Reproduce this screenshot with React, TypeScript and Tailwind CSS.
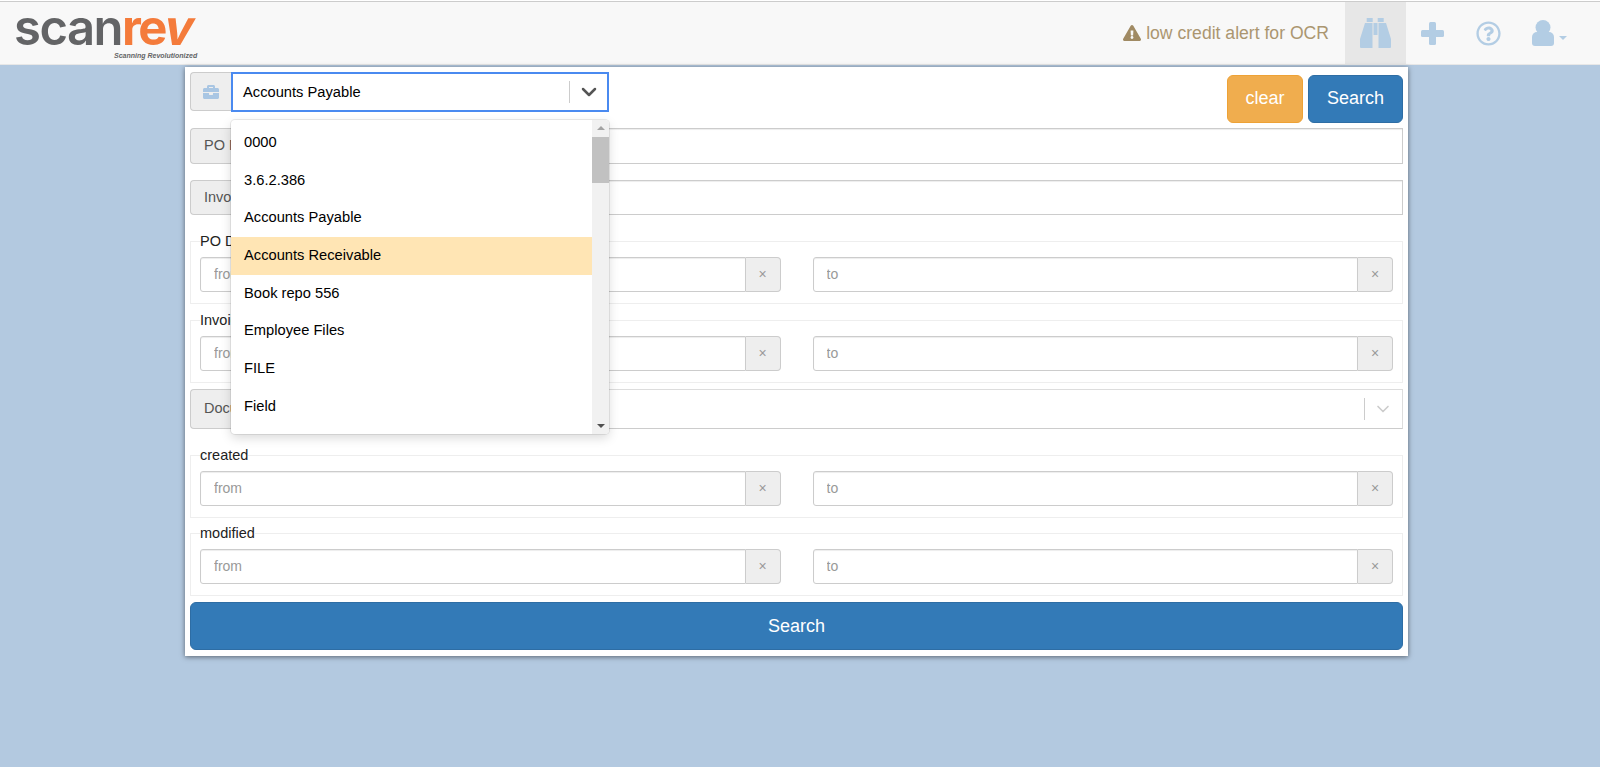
import { FaBriefcase, FaExclamationTriangle, FaRegQuestionCircle } from "react-icons/fa";
import { ChevronDown } from "lucide-react";

const options = ["0000", "3.6.2.386", "Accounts Payable", "Accounts Receivable", "Book repo 556", "Employee Files", "FILE", "Field"];

function DateInput({ placeholder }: { placeholder: string }) {
  return (
    <div className="flex h-[35px] flex-1">
      <input
        placeholder={placeholder}
        className="min-w-0 flex-1 rounded-l-[3px] border border-[#ccc] bg-white pl-[13px] text-[14px] shadow-[inset_0_1px_1px_rgba(0,0,0,0.075)] outline-none placeholder:text-[#999]"
      />
      <span className="flex w-[35px] items-center justify-center rounded-r-[4px] border border-l-0 border-[#ccc] bg-[#eee] text-[14px] text-[#999]">
        ×
      </span>
    </div>
  );
}

function DateRange({ label, className }: { label: string; className: string }) {
  return (
    <fieldset className={`border border-[#eee] px-[9px] pb-[11px] pt-[6px] ${className}`}>
      <legend className="text-[14.5px] leading-[20px] text-[#222]">{label}</legend>
      <div className="flex gap-[32px]">
        <DateInput placeholder="from" />
        <DateInput placeholder="to" />
      </div>
    </fieldset>
  );
}

function TextRow({ label, className }: { label: string; className: string }) {
  return (
    <div className={`flex ${className}`}>
      <span className="flex w-[120px] items-center whitespace-nowrap rounded-l-[4px] border border-r-0 border-[#ccc] bg-[#eee] pl-[13px] text-[14.5px] text-[#555]">
        {label}
      </span>
      <input className="min-w-0 flex-1 border border-[#ccc] bg-white shadow-[inset_0_1px_1px_rgba(0,0,0,0.075)] outline-none" />
    </div>
  );
}

function Dropdown() {
  return (
    <div className="absolute left-[46px] top-[53px] z-10 flex h-[314px] w-[378px] overflow-hidden rounded-[4px] bg-white shadow-[0_0_0_1px_rgba(0,0,0,0.08),0_4px_11px_rgba(0,0,0,0.15)]">
      <ul className="flex-1 pt-[4px] text-[14.7px] text-black">
        {options.map((o) => (
          <li key={o} className={`flex h-[37.7px] items-center pb-[2px] pl-[13px] ${o === "Accounts Receivable" ? "bg-[#ffe5b4]" : ""}`}>
            {o}
          </li>
        ))}
      </ul>
      <div className="relative w-[17px] bg-[#f1f1f1]">
        <span className="absolute left-[5px] top-[6px] h-0 w-0 border-x-[4px] border-b-[4px] border-x-transparent border-b-[#a3a3a3]" />
        <span className="absolute left-0 top-[17px] h-[46px] w-full bg-[#c1c1c1]" />
        <span className="absolute bottom-[6px] left-[5px] h-0 w-0 border-x-[4px] border-t-[4px] border-x-transparent border-t-[#505050]" />
      </div>
    </div>
  );
}

function BinocularsIcon() {
  return (
    <svg width="31" height="30" viewBox="0 0 31 30" fill="currentColor">
      <rect x="6.7" y="0" width="6" height="4" />
      <rect x="17.7" y="0" width="6" height="4" />
      <path d="M5 5h7.5v25H1a1 1 0 0 1-1-1v-8z" />
      <path d="M18.5 5H26l5 16v8a1 1 0 0 1-1 1H18.5z" />
      <rect x="13.5" y="5" width="4" height="12" />
    </svg>
  );
}

function PlusIcon() {
  return (
    <svg width="23" height="23" viewBox="0 0 23 23" fill="currentColor">
      <rect x="8" y="0" width="7" height="23" rx="1.5" />
      <rect x="0" y="8" width="23" height="7" rx="1.5" />
    </svg>
  );
}

function UserIcon() {
  return (
    <svg width="22" height="26" viewBox="0 0 22 26" fill="currentColor">
      <circle cx="11" cy="7.5" r="7.5" />
      <path d="M0 17a5 5 0 0 1 5-5h12a5 5 0 0 1 5 5v6a3 3 0 0 1-3 3H3a3 3 0 0 1-3-3z" />
    </svg>
  );
}

export default function App() {
  return (
    <div className="h-[767px] overflow-hidden bg-[#b3c9e0] font-['Liberation_Sans',Arial,sans-serif]">
      <div className="h-px bg-white" />
      <nav className="flex h-[64px] items-stretch justify-between border-y border-t-[#ccc] border-b-[#e7e7e7] bg-[#f8f8f8]">
        <div className="pl-[14px]">
          <div className="flex items-center font-['Inter',sans-serif] text-[49px] font-semibold leading-[52px] tracking-[-1.5px]">
            <span className="text-[#636466]">scan</span>
            <span className="font-bold tracking-[-2.5px] text-[#f47b3b]">
              re<span className="inline-block -skew-x-12">v</span>
            </span>
          </div>
          <div className="ml-[100px] -mt-[3px] text-[7px] font-bold italic leading-[9px] text-[#636466]">Scanning Revolutionized</div>
        </div>
        <div className="flex items-stretch pr-[33px] text-[#b3cde4]">
          <div className="flex items-center gap-[5px] pr-[16px] text-[17.6px] text-[#ab9670]">
            <FaExclamationTriangle className="h-[18px] w-[18px] text-[#a08a63]" />
            low credit alert for OCR
          </div>
          <div className="flex w-[61px] items-center justify-center bg-[#e7e7e7]">
            <BinocularsIcon />
          </div>
          <div className="flex w-[53px] items-center justify-center">
            <PlusIcon />
          </div>
          <div className="flex w-[59px] items-center justify-center">
            <FaRegQuestionCircle className="h-[25px] w-[25px]" />
          </div>
          <div className="flex items-center pl-[14px]">
            <UserIcon />
            <span className="ml-[5px] mt-[9px] h-0 w-0 border-x-[4px] border-t-[4px] border-x-transparent border-t-[#b3cde4]" />
          </div>
        </div>
      </nav>
      <main className="relative ml-[185px] mt-[2px] flex h-[589px] w-[1223px] flex-col bg-white px-[5px] pt-[5px] shadow-[0_1px_5px_rgba(0,0,0,0.5)]">
        <div className="flex h-[56px] items-start justify-between">
          <div className="flex">
            <span className="flex h-[39px] w-[41px] items-center justify-center rounded-l-[4px] border border-r-0 border-[#ccc] bg-[#eee]">
              <FaBriefcase className="h-[16px] w-[16px] text-[#a9c6e3]" />
            </span>
            <div className="flex h-[40px] w-[378px] items-center border-2 border-[#4a8af0] bg-white pl-[10px] pr-[6px] text-[14.7px] text-black">
              <span className="flex-1">Accounts Payable</span>
              <span className="mr-[7px] h-[22px] w-px bg-[#ccc]" />
              <ChevronDown className="h-[24px] w-[24px] text-[#555]" strokeWidth={2.5} />
            </div>
          </div>
          <div className="mt-[3px] flex gap-[5px] text-[18px] text-white">
            <button className="h-[48px] w-[76px] rounded-[6px] border border-[#eea236] bg-[#f0ad4e] pb-[2px]">clear</button>
            <button className="h-[48px] w-[95px] rounded-[6px] border border-[#2e6da4] bg-[#337ab7] pb-[2px]">Search</button>
          </div>
        </div>
        <TextRow label="PO Number" className="h-[36px]" />
        <TextRow label="Invoice Number" className="mt-[16px] h-[35px]" />
        <DateRange label="PO Date" className="mt-[16px]" />
        <DateRange label="Invoice Date" className="mt-[6px]" />
        <div className="mt-[6px] flex h-[40px]">
          <span className="flex w-[120px] items-center whitespace-nowrap rounded-l-[4px] border border-r-0 border-[#ccc] bg-[#eee] pl-[13px] text-[14.5px] text-[#555]">
            Document Type
          </span>
          <div className="flex flex-1 items-center justify-end border border-[#ddd] border-b-[#ccc] bg-white pr-[9px]">
            <span className="mr-[8px] h-[22px] w-px bg-[#ccc]" />
            <ChevronDown className="h-[20px] w-[20px] text-[#ccc]" />
          </div>
        </div>
        <DateRange label="created" className="mt-[16px]" />
        <DateRange label="modified" className="mt-[5px]" />
        <button className="mt-[6px] h-[48px] rounded-[6px] border border-[#2e6da4] bg-[#337ab7] text-[18px] text-white">Search</button>
        <Dropdown />
      </main>
    </div>
  );
}
